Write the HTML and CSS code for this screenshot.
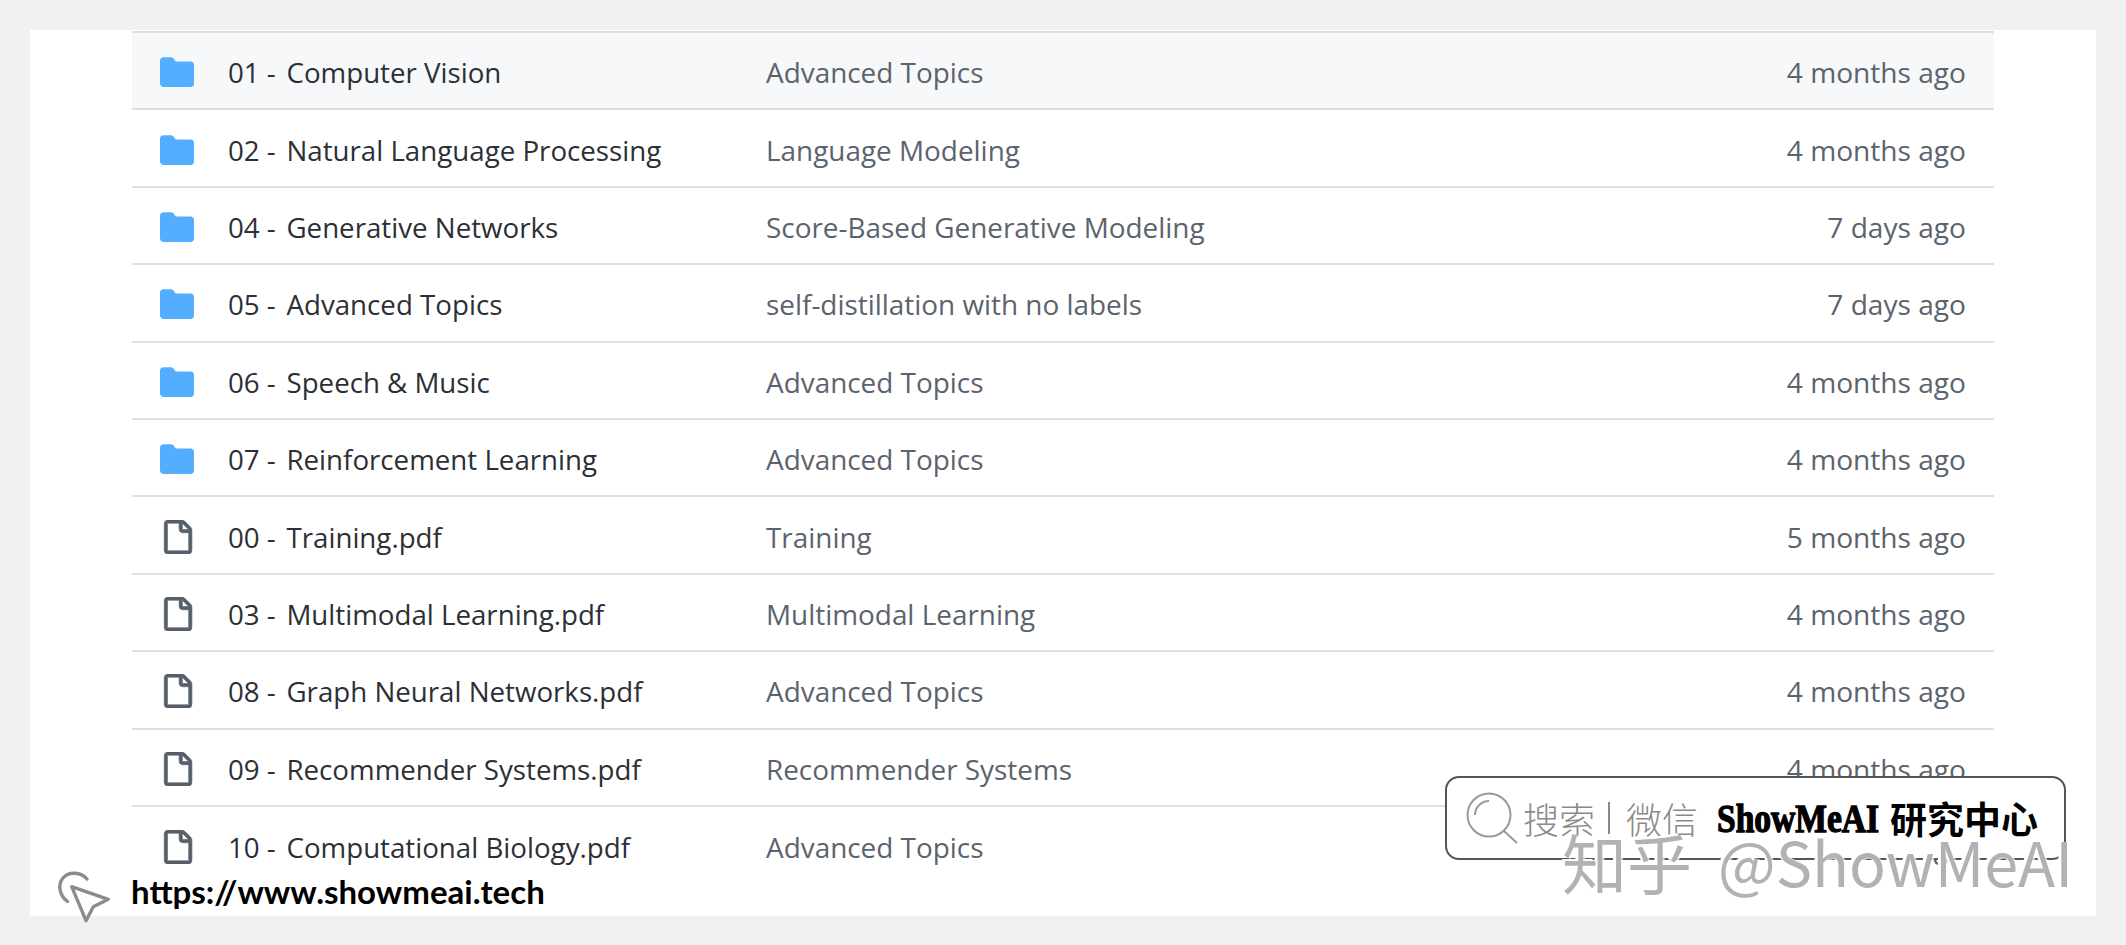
FILE: index.html
```html
<!DOCTYPE html>
<html lang="en">
<head>
<meta charset="utf-8">
<title>ShowMeAI</title>
<link rel="stylesheet" href="styles.css">
</head>
<body>
<main class="panel">
  <div class="list">
    <div class="row hover"><svg class="icon folder" viewBox="0 0 16 16"><use href="#dir"/></svg><span class="name"><span class="num">01 -</span> Computer Vision</span><span class="desc">Advanced Topics</span><span class="age">4 months ago</span></div>
    <div class="row"><svg class="icon folder" viewBox="0 0 16 16"><use href="#dir"/></svg><span class="name"><span class="num">02 -</span> Natural Language Processing</span><span class="desc">Language Modeling</span><span class="age">4 months ago</span></div>
    <div class="row"><svg class="icon folder" viewBox="0 0 16 16"><use href="#dir"/></svg><span class="name"><span class="num">04 -</span> Generative Networks</span><span class="desc">Score-Based Generative Modeling</span><span class="age">7 days ago</span></div>
    <div class="row"><svg class="icon folder" viewBox="0 0 16 16"><use href="#dir"/></svg><span class="name"><span class="num">05 -</span> Advanced Topics</span><span class="desc">self-distillation with no labels</span><span class="age">7 days ago</span></div>
    <div class="row"><svg class="icon folder" viewBox="0 0 16 16"><use href="#dir"/></svg><span class="name"><span class="num">06 -</span> Speech &amp; Music</span><span class="desc">Advanced Topics</span><span class="age">4 months ago</span></div>
    <div class="row"><svg class="icon folder" viewBox="0 0 16 16"><use href="#dir"/></svg><span class="name"><span class="num">07 -</span> Reinforcement Learning</span><span class="desc">Advanced Topics</span><span class="age">4 months ago</span></div>
    <div class="row"><svg class="icon file" viewBox="0 0 16 16"><use href="#doc"/></svg><span class="name"><span class="num">00 -</span> Training.pdf</span><span class="desc">Training</span><span class="age">5 months ago</span></div>
    <div class="row"><svg class="icon file" viewBox="0 0 16 16"><use href="#doc"/></svg><span class="name"><span class="num">03 -</span> Multimodal Learning.pdf</span><span class="desc">Multimodal Learning</span><span class="age">4 months ago</span></div>
    <div class="row"><svg class="icon file" viewBox="0 0 16 16"><use href="#doc"/></svg><span class="name"><span class="num">08 -</span> Graph Neural Networks.pdf</span><span class="desc">Advanced Topics</span><span class="age">4 months ago</span></div>
    <div class="row"><svg class="icon file" viewBox="0 0 16 16"><use href="#doc"/></svg><span class="name"><span class="num">09 -</span> Recommender Systems.pdf</span><span class="desc">Recommender Systems</span><span class="age">4 months ago</span></div>
    <div class="row"><svg class="icon file" viewBox="0 0 16 16"><use href="#doc"/></svg><span class="name"><span class="num">10 -</span> Computational Biology.pdf</span><span class="desc">Advanced Topics</span><span class="age">4 months ago</span></div>
  </div>
</main>

<svg class="defs" aria-hidden="true">
  <symbol id="dir" viewBox="0 0 16 16"><path d="M1.75 1A1.75 1.75 0 0 0 0 2.75v10.5C0 14.216.784 15 1.75 15h12.5A1.75 1.75 0 0 0 16 13.25v-8.5A1.75 1.75 0 0 0 14.25 3H7.5a.25.25 0 0 1-.2-.1l-.9-1.2C6.07 1.26 5.55 1 5 1H1.75Z"/></symbol>
  <symbol id="doc" viewBox="0 0 16 16"><path d="M2 1.75C2 .784 2.784 0 3.75 0h6.586c.464 0 .909.184 1.237.513l2.914 2.914c.329.328.513.773.513 1.237v9.586A1.75 1.75 0 0 1 13.25 16h-9.5A1.75 1.75 0 0 1 2 14.25Zm1.75-.25a.25.25 0 0 0-.25.25v12.5c0 .138.112.25.25.25h9.5a.25.25 0 0 0 .25-.25V6h-2.75A1.75 1.75 0 0 1 9 4.25V1.5Zm6.75.062V4.25c0 .138.112.25.25.25h2.688l-.011-.013-2.914-2.914-.013-.011Z"/></symbol>
</svg>

<div class="search">
  <svg class="lens" viewBox="0 0 52 52"><circle cx="23" cy="23" r="21.5"/><path d="M38 39 L51 51"/><path d="M9 23 A14 14 0 0 1 23 9"/></svg>
  <span class="hint">搜索</span><span class="bar"></span><span class="hint">微信</span>
  <span class="brand">ShowMeAI</span><span class="brand-cn">研究中心</span>
</div>
<div class="mark"><span class="mark-cn">知乎</span><span class="mark-en">@ShowMeAI</span></div>
<svg class="cursor" viewBox="0 0 52 52"><path d="M13.7 15.7 L50.3 28.3 L35.3 35.7 L28 49.7 Z"/><path d="M9.5 30.5 C2 25 -1 14 5 7 C11 0 23 1 29 8"/></svg>
<div class="url">https://www.showmeai.tech</div>
</body>
</html>
```
FILE: styles.css
```css
html, body { margin: 0; height: 945px; overflow: hidden; }
body { background: #f1f1f1; padding: 30px; box-sizing: border-box; position: relative; font-family: "Open Sans", "Noto Sans", sans-serif; }
.panel { background: #fff; height: 885px; overflow: hidden; padding: 1px 102px 0 102px; }
.defs { width: 0; height: 0; position: absolute; }
.list { border-top: 2px solid #dcdfe3; }
.row { height: 77.4px; box-sizing: border-box; border-bottom: 2px solid #dcdfe3; display: grid; grid-template-columns: 33px 503px 1fr auto; column-gap: 35px; align-items: center; padding: 3px 28px 0; font-size: 27.9px; color: #2b3036; }
.row:last-child { border-bottom: 0; }
.row.hover { background: #f6f8fa; }
.name { font-size: 27.7px; }
.num { margin-right: 3.5px; }
.desc { color: #5b636d; }
.age { color: #5b636d; font-size: 28.1px; }
.icon { width: 34px; height: 34px; display: block; }
.folder { fill: #54aeff; }
.file { fill: #57606a; stroke: #57606a; stroke-width: .3; }

.search { position: absolute; left: 1445px; top: 776px; width: 621px; height: 84px; box-sizing: border-box; border: 2px solid #555; border-radius: 14px; background: #fff; display: flex; align-items: center; padding: 0 0 0 19px; font-family: "Noto Sans CJK SC", sans-serif; }
.lens { width: 52px; height: 52px; fill: none; stroke: #999; stroke-width: 2; margin-right: 5px; flex: none; }
.hint { font-size: 36px; color: #8a8a8a; font-weight: 300; line-height: 1; }
.bar { width: 2px; height: 32px; background: #888; margin: 0 16px 0 13px; }
.brand { display: inline-block; width: 165px; flex: none; white-space: nowrap; font-family: "Liberation Serif", serif; font-weight: 700; font-size: 39px; line-height: 1; color: #000; margin-left: 19px; -webkit-text-stroke: 1.3px #000; transform: scaleX(.86); transform-origin: left center; }
.brand-cn { font-size: 37px; font-weight: 700; color: #000; margin-left: 8px; line-height: 1; white-space: nowrap; }
.mark { position: absolute; left: 1562px; top: 821px; display: flex; align-items: center; font-family: "Noto Sans CJK SC", sans-serif; font-weight: 400; line-height: 80px; color: #b2b2b2; white-space: nowrap; text-shadow: -3px -2px 0 #fff, 2px 1px 0 rgba(255,255,255,.7); }
.mark-cn { font-size: 65px; }
.mark-en { font-size: 61px; margin-left: 26px; }
.cursor { position: absolute; left: 58px; top: 871px; width: 52px; height: 52px; fill: #fff; stroke: #8c8c8c; stroke-width: 3.4; stroke-linejoin: round; stroke-linecap: round; overflow: visible; }
.cursor path:last-child { fill: none; }
.url { position: absolute; left: 131px; top: 871px; font-family: "Lato", sans-serif; font-weight: 700; font-size: 33px; line-height: 40px; color: #000; }
```
